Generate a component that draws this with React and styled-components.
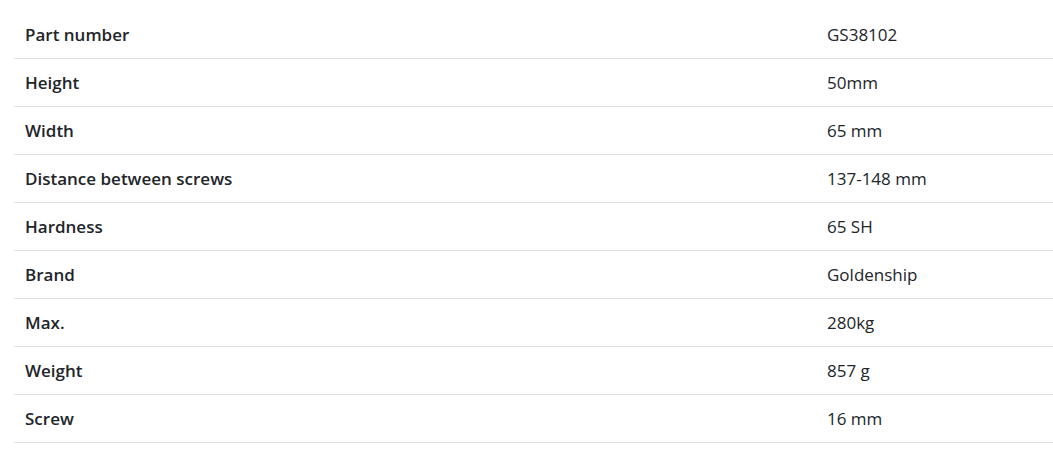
import React from "react";
import styled, { createGlobalStyle } from "styled-components";

const Global = createGlobalStyle`
  html, body { margin: 0; padding: 0; background: #fff; }
  body { font-family: "Open Sans", "Noto Sans", sans-serif; color: #212529; }
`;

const Wrap = styled.div`
  padding: 11px 0 0 14px;
`;

const Table = styled.table`
  width: 1039px;
  border-collapse: collapse;
  font-size: 17px;
`;

const Row = styled.tr`
  border-bottom: 1px solid #dee2e6;
`;

const Cell = styled.td`
  height: 47px;
  padding: 0 11px;
  vertical-align: middle;
  font-weight: ${(p) => (p.$bold ? 600 : 400)};
  width: ${(p) => (p.$bold ? "780px" : "auto")};
  color: #212529;
`;

const data = [
  ["Part number", "GS38102"],
  ["Height", "50mm"],
  ["Width", "65 mm"],
  ["Distance between screws", "137-148 mm"],
  ["Hardness", "65 SH"],
  ["Brand", "Goldenship"],
  ["Max.", "280kg"],
  ["Weight", "857 g"],
  ["Screw", "16 mm"],
];

export default function App() {
  return (
    <>
      <Global />
      <Wrap>
        <Table>
          <tbody>
            {data.map(([k, v]) => (
              <Row key={k}>
                <Cell $bold>{k}</Cell>
                <Cell>{v}</Cell>
              </Row>
            ))}
          </tbody>
        </Table>
      </Wrap>
    </>
  );
}
